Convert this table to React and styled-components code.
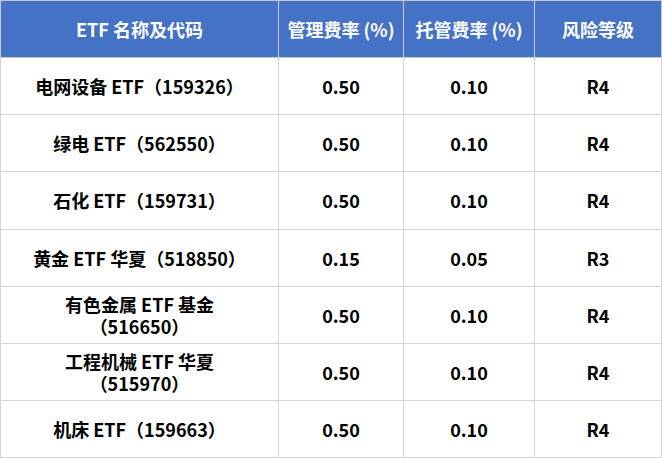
import React from 'react';
import styled, { createGlobalStyle } from 'styled-components';

const rows = [
  { name: '电网设备 ETF（159326）', mgmt: '0.50', custody: '0.10', risk: 'R4' },
  { name: '绿电 ETF（562550）', mgmt: '0.50', custody: '0.10', risk: 'R4' },
  { name: '石化 ETF（159731）', mgmt: '0.50', custody: '0.10', risk: 'R4' },
  { name: '黄金 ETF 华夏（518850）', mgmt: '0.15', custody: '0.05', risk: 'R3' },
  { name: ['有色金属 ETF 基金', '（516650）'], mgmt: '0.50', custody: '0.10', risk: 'R4' },
  { name: ['工程机械 ETF 华夏', '（515970）'], mgmt: '0.50', custody: '0.10', risk: 'R4' },
  { name: '机床 ETF（159663）', mgmt: '0.50', custody: '0.10', risk: 'R4' },
];

const columns = [
  { title: 'ETF 名称及代码', width: 278 },
  { title: '管理费率 (%)', width: 125 },
  { title: '托管费率 (%)', width: 131 },
  { title: '风险等级', width: 127 },
];

function App() {
  return (
    <>
      <GlobalStyle />
      <Page>
        <FeeTable>
          <colgroup>
            {columns.map((c) => (
              <col key={c.title} style={{ width: c.width }} />
            ))}
          </colgroup>
          <thead>
            <tr>
              {columns.map((c) => (
                <HeadCell key={c.title}>{c.title}</HeadCell>
              ))}
            </tr>
          </thead>
          <tbody>
            {rows.map((r, i) => (
              <tr key={i}>
                <Cell>
                  {Array.isArray(r.name)
                    ? r.name.map((line) => <Line key={line}>{line}</Line>)
                    : r.name}
                </Cell>
                <Cell>{r.mgmt}</Cell>
                <Cell>{r.custody}</Cell>
                <Cell>{r.risk}</Cell>
              </tr>
            ))}
          </tbody>
        </FeeTable>
      </Page>
    </>
  );
}

const GlobalStyle = createGlobalStyle`
  body {
    margin: 0;
    background: #ffffff;
    font-family: "Noto Sans CJK SC", "Noto Sans", sans-serif;
  }
`;

const Page = styled.div`
  width: 662px;
  height: 459px;
`;

const FeeTable = styled.table`
  width: 661px;
  border-collapse: collapse;
  table-layout: fixed;
`;

const HeadCell = styled.th`
  height: 56px;
  padding: 0;
  background: #4472c4;
  color: #ffffff;
  font-size: 18px;
  font-weight: 700;
  line-height: 22px;
  text-align: center;
  vertical-align: middle;
  border: 1px solid #c8c8c8;
`;

const Cell = styled.td`
  height: 56.2px;
  padding: 0;
  color: #000000;
  font-size: 18px;
  font-weight: 700;
  line-height: 22px;
  text-align: center;
  vertical-align: middle;
  border: 1px solid #d4d4d4;
`;

const Line = styled.div`
  display: block;
`;

export default App;
